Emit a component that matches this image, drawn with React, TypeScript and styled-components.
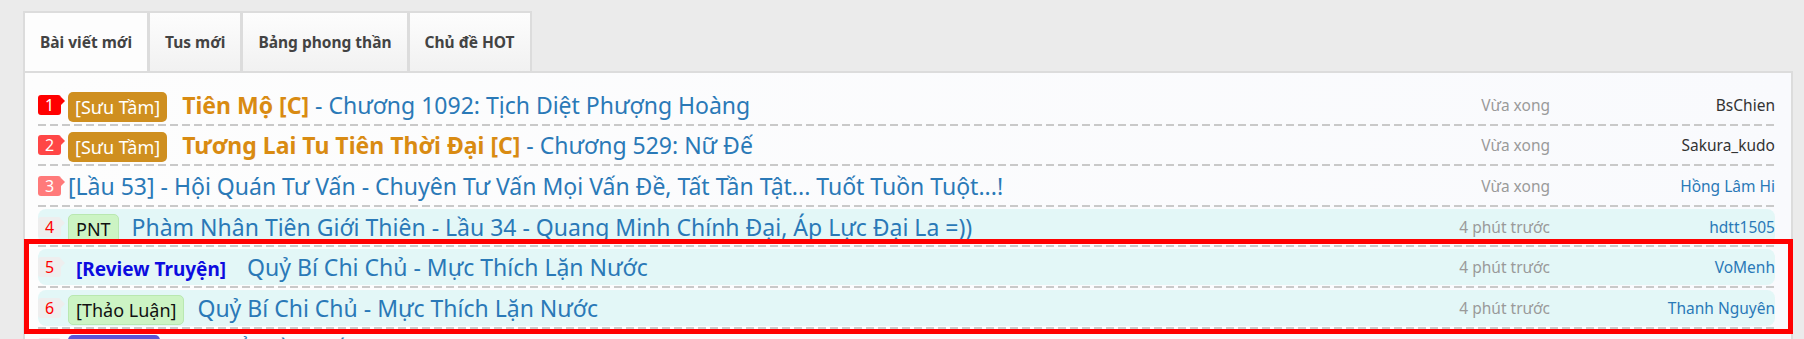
import React from "react";
import styled, { createGlobalStyle, css } from "styled-components";

type Tone = "hot" | "warm" | "mild" | "plain";
type LabelKind = "gold" | "green" | "review" | "purple";

type Thread = {
    id: number;
    tone: Tone;
    label?: { kind: LabelKind; text: string };
    lead?: string;
    title: string;
    time: string;
    user: string;
    userLink?: boolean;
    cyan?: boolean;
};

const threads: Thread[] = [
    {id: 1, tone: "hot", label: {kind: "gold", text: "[Sưu Tầm]"}, lead: "Tiên Mộ [C]", title: "Chương 1092: Tịch Diệt Phượng Hoàng", time: "Vừa xong", user: "BsChien"},
    {id: 2, tone: "warm", label: {kind: "gold", text: "[Sưu Tầm]"}, lead: "Tương Lai Tu Tiên Thời Đại [C]", title: "Chương 529: Nữ Đế", time: "Vừa xong", user: "Sakura_kudo"},
    {id: 3, tone: "mild", title: "[Lầu 53] - Hội Quán Tư Vấn - Chuyên Tư Vấn Mọi Vấn Đề, Tất Tần Tật... Tuốt Tuồn Tuột...!", time: "Vừa xong", user: "Hồng Lâm Hi", userLink: true},
    {id: 4, tone: "plain", cyan: true, label: {kind: "green", text: "PNT"}, title: "Phàm Nhân Tiên Giới Thiên - Lầu 34 - Quang Minh Chính Đại, Áp Lực Đại La =))", time: "4 phút trước", user: "hdtt1505", userLink: true},
    {id: 5, tone: "plain", cyan: true, label: {kind: "review", text: "[Review Truyện]"}, title: "Quỷ Bí Chi Chủ - Mực Thích Lặn Nước", time: "4 phút trước", user: "VoMenh", userLink: true},
    {id: 6, tone: "plain", cyan: true, label: {kind: "green", text: "[Thảo Luận]"}, title: "Quỷ Bí Chi Chủ - Mực Thích Lặn Nước", time: "4 phút trước", user: "Thanh Nguyên", userLink: true},
    {id: 7, tone: "plain", label: {kind: "purple", text: "[Convert]"}, title: "Vạn Cổ Thần Đế - Chương 3120", time: "5 phút trước", user: "tieuthu", userLink: true},
];

const GlobalStyle = createGlobalStyle`
    html, body {
        margin: 0;
        background: #ebebeb;
    }

    body {
        font-family: "Noto Sans", "Open Sans", sans-serif;
    }
`;

const Page = styled.div`
    height: 339px;
    box-sizing: border-box;
    overflow: hidden;
    padding: 11px 11px 0 23px;
`;

const TabBar = styled.ul`
    display: flex;
    margin: 0;
    padding: 0;
    list-style: none;
`;

const Tab = styled.li<{ $active?: boolean }>`
    height: 58px;
    display: flex;
    align-items: center;
    padding: 0 15px;
    border: 2px solid #dcdcdc;
    border-bottom: none;
    margin-right: -1px;
    font-size: 15.5px;
    font-weight: 700;
    color: #434343;
    background: ${p => p.$active ? '#fdfdfd' : 'linear-gradient(#fdfdfd, #f1f1f1)'};
`;

const Panel = styled.div`
    border: 2px solid #dcdcdc;
    background: linear-gradient(90deg, #fdfdfd, #f9fafd);
    padding: 12px 16px 0 13px;
    height: 400px;
`;

const List = styled.ul`
    margin: 0;
    padding: 0;
    list-style: none;
`;

const Highlight = styled.div`
    position: relative;

    &::after {
        content: "";
        position: absolute;
        top: -8px;
        bottom: -5px;
        left: -14px;
        right: -18px;
        border: 5px solid #ff0000;
        pointer-events: none;
    }
`;

const Item = styled.li`
    padding: 2px 0 3px;
    background: repeating-linear-gradient(90deg, #c9c9c9 0 8px, transparent 8px 12px) left bottom / 100% 2px no-repeat;
`;

const ItemBody = styled.div<{ $cyan?: boolean }>`
    display: flex;
    align-items: center;
    min-height: 35.6px;
    border-radius: 8px;
    background: ${p => p.$cyan ? '#e3f7f7' : 'transparent'};
    white-space: nowrap;
`;

const badgeColors: Record<Tone, string> = {
    hot: '#ff0000',
    warm: '#ff4646',
    mild: '#ff7a7a',
    plain: '#eeeeee',
};

const Rank = styled.span<{ $tone: Tone }>`
    position: relative;
    flex: none;
    width: 23px;
    height: 20px;
    margin-right: 7px;
    border-radius: 3px;
    text-align: center;
    font-size: 16px;
    line-height: 20px;
    background: ${p => badgeColors[p.$tone]};
    color: ${p => p.$tone === 'plain' ? '#ff0000' : '#ffffff'};

    &::after {
        content: "";
        position: absolute;
        right: -4px;
        top: 2px;
        border-left: 4px solid ${p => badgeColors[p.$tone]};
        border-top: 4px solid transparent;
        border-bottom: 4px solid transparent;
    }
`;

const Label = styled.span<{ $kind: LabelKind }>`
    flex: none;
    box-sizing: border-box;
    height: 30px;
    margin-top: 4px;
    margin-right: 13px;
    padding: 0 7px;
    border-radius: 5px;
    font-size: 18px;
    line-height: 30px;
    ${p => p.$kind === 'gold' && css`
        background: #cf8f20;
        color: #ffffff;
        margin-right: 15px;
    `}
    ${p => p.$kind === 'green' && css`
        background: #ccf4c4;
        border: 1px solid #b9e8b1;
        line-height: 28px;
        color: #111111;
    `}
    ${p => p.$kind === 'review' && css`
        color: #0c0ce0;
        font-size: 19px;
        font-weight: 700;
        padding: 0 8px;
    `}
    ${p => p.$kind === 'purple' && css`
        background: #5b53d5;
        color: #ffffff;
    `}
`;

const Title = styled.span`
    font-size: 23px;
    color: #2a79b7;
    overflow: hidden;
    text-overflow: ellipsis;
`;

const Lead = styled.b`
    color: #d98b12;
`;

const Time = styled.span`
    margin-left: auto;
    padding-left: 20px;
    font-size: 15.5px;
    color: #9a9a9a;
`;

const User = styled.span<{ $link?: boolean }>`
    flex: none;
    width: 225px;
    text-align: right;
    font-size: 15.5px;
    color: ${p => p.$link ? '#2a79b7' : '#333333'};
`;

function Row({thread}: { thread: Thread }) {
    return <Item>
        <ItemBody $cyan={thread.cyan}>
            <Rank $tone={thread.tone}>{thread.id}</Rank>
            {thread.label && <Label $kind={thread.label.kind}>{thread.label.text}</Label>}
            <Title>
                {thread.lead && <><Lead>{thread.lead}</Lead> - </>}
                {thread.title}
            </Title>
            <Time>{thread.time}</Time>
            <User $link={thread.userLink}>{thread.user}</User>
        </ItemBody>
    </Item>;
}

export default function App() {
    const tabs = ['Bài viết mới', 'Tus mới', 'Bảng phong thần', 'Chủ đề HOT'];

    return <Page>
        <GlobalStyle/>
        <TabBar>
            {tabs.map((tab, idx) => <Tab key={tab} $active={idx === 0}>{tab}</Tab>)}
        </TabBar>
        <Panel>
            <List>
                {threads.slice(0, 4).map(t => <Row key={t.id} thread={t}/>)}
                <Highlight>
                    {threads.slice(4, 6).map(t => <Row key={t.id} thread={t}/>)}
                </Highlight>
                {threads.slice(6).map(t => <Row key={t.id} thread={t}/>)}
            </List>
        </Panel>
    </Page>;
}
